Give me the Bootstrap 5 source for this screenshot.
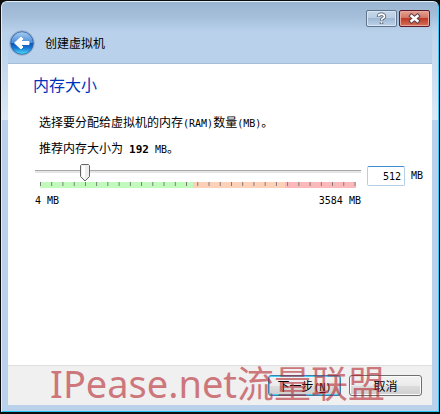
<!DOCTYPE html>
<html lang="zh-CN">
<head>
<meta charset="utf-8">
<meta name="viewport" content="width=device-width, initial-scale=1">
<title>创建虚拟机</title>
<link rel="stylesheet" href="https://cdn.jsdelivr.net/npm/bootstrap@5.3.0/dist/css/bootstrap.min.css">
<style>
body{background:#0c0c0c;color:#000;font:12px/16px "Noto Sans CJK SC",sans-serif}
.desk{padding:1px 1px 2px 1px}
.win{border:1px solid #dff0fb;border-right-color:#3cc8f4;border-bottom-color:#22c4f4;border-radius:6px 6px 0 0;padding:0 6px 6px;
 background:linear-gradient(180deg,#b9d1ea00 40px,#dbe8f6 118px) 0 0/6px 118px no-repeat,
 linear-gradient(180deg,#b9d1ea00 10px,#dbe8f6 118px) 100% 0/6px 118px no-repeat,
 linear-gradient(180deg,#9ab5d1 0,#a6c0dc 16px,#b9d1ea 30px,#b9d1ea 100%)}
.head{height:61px;padding:8px 2px 7px 1px}
.caption-btns{gap:2px}
.cap{width:31px;height:17px;padding:0;border:1px solid #62748c;border-radius:2px;line-height:1;
 background:linear-gradient(#c6d7e9,#b9cde2 50%,#9fb8d3 50%,#bdd3ea);box-shadow:inset 0 0 0 1px #d8e5f2}
.cap.close-x{border-color:#5c1a2a;background:linear-gradient(#e4a193,#d4705f 50%,#bd3a25 50%,#d8705a);box-shadow:inset 0 0 0 1px #e6a79c}
.back{width:26px;height:26px;padding:0;border:0;background:none}
.title{padding-left:10px}
.pane{background:#fff;border-top:1px solid #a4bcd8}
.main{flex:1;padding:10px 9px 0 27px}
h1{font-size:16px;line-height:20px;color:#0033bb;margin:0 0 0 -2px;font-weight:400}
.m{font-family:"DejaVu Sans Mono",monospace;font-size:10px}
.m strong{font-size:11px}
.desc{padding:20px 4px 0}
.desc p{margin:0 0 10px;height:16px}
.desc p:last-child{margin:0 0 8px}
.mem{gap:6px}
.range{display:block;width:100%;height:18px;margin:0;appearance:none;-webkit-appearance:none;background:
 linear-gradient(#a8a8a8,#a8a8a8) 0 6px/100% 1px no-repeat,linear-gradient(#e6e6e6,#e6e6e6) 0 7px/100% 2px no-repeat}
.range::-webkit-slider-thumb{-webkit-appearance:none;width:10px;height:18px;border:0;
 background:url("data:image/svg+xml,%3Csvg xmlns='http://www.w3.org/2000/svg' width='10' height='18'%3E%3Cpath d='M1.5.5h7l1 1V12.5L5 17 .5 12.5V1.5z' fill='%23eee' stroke='%23666'/%3E%3Cpath d='M2 2h3v13L2 12z' fill='%23fff'/%3E%3C/svg%3E")}
.scale{height:6px;margin:0 5px;background:linear-gradient(90deg,#777 1px,transparent 1px) 0 0/calc((100% - 1px)/28) 4px repeat-x,
 linear-gradient(90deg,#c0fbbc 48.5%,#fdd0b8 48.5%,#fdd0b8 77.5%,#fbb9bb 77.5%)}
.ends{padding-top:5px}
.entry{gap:6px;padding-top:2px}
.num{width:38px;height:20px;padding:0 3px;border:1px solid #b5cfe7;border-top-color:#3d8bd0;border-radius:2px;text-align:right;color:#000}
.foot{height:40px;gap:8px;padding:0 10px;background:#f0f0f0;border-top:1px solid #dfdfdf}
.push{width:73px;height:21px;padding:0;font-size:12px;line-height:19px;color:#000;border:1px solid #707070;border-radius:3px;
 background:linear-gradient(#f2f2f2,#ebebeb 50%,#dddddd 50%,#cfcfcf);box-shadow:inset 0 0 0 1px #fbfbfb}
.push.go{border-color:#3c7fb1;box-shadow:inset 0 0 0 1px #48d0f4}
.wm{left:42px;bottom:1px;font:37px/40px "Noto Sans","Noto Sans CJK SC",sans-serif;color:#b4202a;opacity:.58;pointer-events:none;white-space:nowrap}
.wm span{font-size:38px}
</style>
<script src="https://cdn.jsdelivr.net/npm/bootstrap@5.3.0/dist/js/bootstrap.bundle.min.js"></script>
</head>
<body>
<div class="desk d-flex flex-column vh-100">
 <div class="win d-flex flex-column flex-grow-1">
  <header class="head d-flex justify-content-between">
   <div class="d-flex align-items-center align-self-end">
    <button class="back" type="button" aria-label="返回">
     <svg class="d-block" width="26" height="26" viewBox="0 0 26 26"><defs><linearGradient id="g" x2="0" y2="1"><stop stop-color="#a9cdf0"/><stop offset=".48" stop-color="#4a8edb"/><stop offset=".5" stop-color="#0b51b4"/><stop offset=".72" stop-color="#1879d6"/><stop offset="1" stop-color="#4ce0fa"/></linearGradient></defs><circle cx="13" cy="13" r="12.3" fill="#a9c3e2" stroke="#8fa8c6" stroke-width=".8"/><circle cx="13" cy="13" r="11.3" fill="url(#g)" stroke="#2c5c9c" stroke-width=".8"/><path d="M5.500 13l6.500-6 2 2-2.500 2.500H20v3h-8.500L14 17l-2 2z" fill="#fff" stroke="#fff" stroke-linejoin="round"/></svg>
    </button>
    <span class="title">创建虚拟机</span>
   </div>
   <div class="caption-btns d-flex align-items-start">
    <button class="cap" type="button" aria-label="帮助"><svg class="d-block mx-auto" width="13" height="13" viewBox="0 0 13 13" fill="none"><path d="M3.500 5C3.500 1.500 9.500 1.500 9.500 4.500 9.500 6.500 6.500 6 6.500 8.500M6.500 10v2" stroke="#4a5668" stroke-width="3.400"/><path d="M3.500 4.600C3.500 1.500 9.500 1.500 9.500 4.500 9.500 6.500 6.500 6 6.500 8.200M6.500 9.700v1.800" stroke="#fff" stroke-width="1.800"/></svg></button>
    <button class="cap close-x" type="button" aria-label="关闭"><svg class="d-block mx-auto" width="13" height="11" viewBox="0 0 13 11"><path d="M3.500 3l6 5m0-5l-6 5" stroke="#53424c" stroke-width="4.400" stroke-linecap="square"/><path d="M3.500 3l6 5m0-5l-6 5" stroke="#fff" stroke-width="2.400" stroke-linecap="square"/></svg></button>
   </div>
  </header>
  <div class="pane position-relative d-flex flex-column flex-grow-1">
   <main class="main">
    <h1>内存大小</h1>
    <div class="desc">
     <p>选择要分配给虚拟机的内存<span class="m">(RAM)</span>数量<span class="m">(MB)</span>。</p>
     <p>推荐内存大小为<span class="m"> <strong>192</strong> MB</span>。</p>
    </div>
    <div class="mem d-flex align-items-start">
     <div class="flex-grow-1">
      <input class="range" type="range" min="4" max="3584" step="4" value="512" aria-label="内存大小">
      <div class="scale"></div>
      <div class="ends m d-flex justify-content-between"><span>4 MB</span><span>3584 MB</span></div>
     </div>
     <div class="entry d-flex align-items-center m">
      <input class="num m" id="mb" type="text" value="512"><label for="mb">MB</label>
     </div>
    </div>
   </main>
   <footer class="foot d-flex justify-content-end align-items-center">
    <button class="push go" type="button">下一步<span class="m">(<u>N</u>)</span></button>
    <button class="push" type="button">取消</button>
   </footer>
   <div class="wm position-absolute"><span>IPease.net</span>流量联盟</div>
  </div>
 </div>
</div>
</body>
</html>
